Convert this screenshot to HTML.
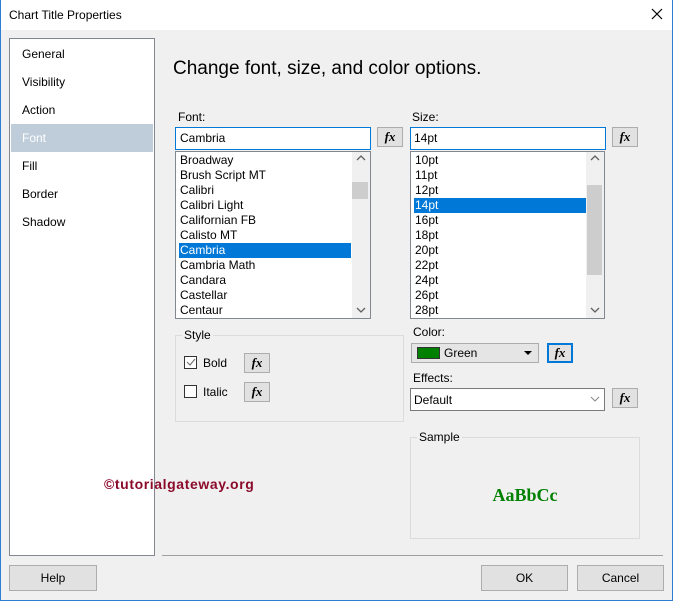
<!DOCTYPE html>
<html><head><meta charset="utf-8"><style>
*{box-sizing:border-box;margin:0;padding:0}
body{width:673px;height:601px;background:#f0f0f0;font-family:"Liberation Sans",sans-serif;font-size:12px;color:#000;position:relative;overflow:hidden}
.a{position:absolute}
.frame{left:0;top:0;width:673px;height:601px;border:1px solid #2b7fd4;border-top:none}
.title{left:0;top:0;width:673px;height:30px;background:#fff}
.nav{left:9px;top:38px;width:146px;height:518px;background:#fff;border:1px solid #828790}
.nav div{position:absolute;left:12px;font-size:12px}
.box{background:#fff;border:1px solid #7a7a7a}
.fx{background:#e1e1e1;border:1px solid #adadad;font-family:"Liberation Serif",serif;font-weight:bold;font-style:italic;font-size:13px;text-align:center;line-height:18px}
.list div{position:absolute;left:3px;height:15px;line-height:15px;width:172px;padding-left:1px}
.sel{background:#0078d7;color:#fff}
.sb{background:#f0f0f0}
.btn{background:#e1e1e1;border:1px solid #adadad;text-align:center;line-height:24px}
.grp{border:1px solid #dcdcdc}
.lbl{background:#f0f0f0;padding:0 2px}
</style></head><body>
<div class="a title"></div>
<div class="a" style="left:9px;top:8px;font-size:12px">Chart Title Properties</div>
<svg class="a" style="left:651px;top:8px" width="12" height="12"><path d="M1 1L11 11M11 1L1 11" stroke="#000" stroke-width="1.2"/></svg>
<div class="a frame"></div>

<div class="a nav">
<div style="top:8px">General</div>
<div style="top:36px">Visibility</div>
<div style="top:64px">Action</div>
<div style="left:1px;top:85px;width:142px;height:28px;background:#bfcddb"></div>
<div style="top:92px;color:#fff">Font</div>
<div style="top:120px">Fill</div>
<div style="top:148px">Border</div>
<div style="top:176px">Shadow</div>
</div>

<div class="a" style="left:173px;top:58px;font-size:19px;color:#000">Change font, size, and color options.</div>

<div class="a" style="left:178px;top:110px">Font:</div>
<div class="a box" style="left:175px;top:127px;width:196px;height:23px;border-color:#0078d7;padding:3px 4px">Cambria</div>
<div class="a fx" style="left:377px;top:127px;width:26px;height:20px">fx</div>
<div class="a box list" style="left:175px;top:151px;width:196px;height:168px;border-color:#828790">
<div style="top:1px">Broadway</div><div style="top:16px">Brush Script MT</div><div style="top:31px">Calibri</div><div style="top:46px">Calibri Light</div><div style="top:61px">Californian FB</div><div style="top:76px">Calisto MT</div><div class="sel" style="top:91px">Cambria</div><div style="top:106px">Cambria Math</div><div style="top:121px">Candara</div><div style="top:136px">Castellar</div><div style="top:151px">Centaur</div>
<div class="sb" style="left:176px;top:0;width:18px;height:166px;padding:0"></div>
<div style="left:176px;top:30px;width:16px;height:17px;background:#cdcdcd;padding:0"></div>
<svg class="a" style="left:180px;top:3px" width="10" height="6"><path d="M1 5L5 1L9 5" stroke="#606060" fill="none" stroke-width="1.3"/></svg>
<svg class="a" style="left:180px;top:155px" width="10" height="6"><path d="M1 1L5 5L9 1" stroke="#606060" fill="none" stroke-width="1.3"/></svg>
</div>

<div class="a" style="left:412px;top:110px">Size:</div>
<div class="a box" style="left:410px;top:127px;width:196px;height:23px;border-color:#0078d7;padding:3px 3px">14pt</div>
<div class="a fx" style="left:612px;top:127px;width:26px;height:20px">fx</div>
<div class="a box list" style="left:410px;top:151px;width:195px;height:168px;border-color:#828790">
<div style="top:1px">10pt</div><div style="top:16px">11pt</div><div style="top:31px">12pt</div><div class="sel" style="top:46px">14pt</div><div style="top:61px">16pt</div><div style="top:76px">18pt</div><div style="top:91px">20pt</div><div style="top:106px">22pt</div><div style="top:121px">24pt</div><div style="top:136px">26pt</div><div style="top:151px">28pt</div>
<div class="sb" style="left:175px;top:0;width:18px;height:166px;padding:0"></div>
<div style="left:176px;top:33px;width:15px;height:90px;background:#cdcdcd;padding:0"></div>
<svg class="a" style="left:179px;top:3px" width="10" height="6"><path d="M1 5L5 1L9 5" stroke="#606060" fill="none" stroke-width="1.3"/></svg>
<svg class="a" style="left:179px;top:155px" width="10" height="6"><path d="M1 1L5 5L9 1" stroke="#606060" fill="none" stroke-width="1.3"/></svg>
</div>

<div class="a grp" style="left:175px;top:335px;width:229px;height:87px"></div>
<div class="a lbl" style="left:182px;top:328px">Style</div>
<div class="a" style="left:184px;top:356px;width:13px;height:13px;border:1px solid #333;background:#fff"></div>
<svg class="a" style="left:186px;top:358px" width="10" height="9"><path d="M1 4L4 7L9 1" stroke="#777" fill="none" stroke-width="1.2"/></svg>
<div class="a" style="left:203px;top:356px">Bold</div>
<div class="a fx" style="left:244px;top:353px;width:26px;height:20px">fx</div>
<div class="a" style="left:184px;top:385px;width:13px;height:13px;border:1px solid #333;background:#fff"></div>
<div class="a" style="left:203px;top:385px">Italic</div>
<div class="a fx" style="left:244px;top:382px;width:26px;height:20px">fx</div>

<div class="a" style="left:413px;top:325px">Color:</div>
<div class="a" style="left:411px;top:343px;width:128px;height:20px;background:#e5e5e5;border:1px solid #adadad"></div>
<div class="a" style="left:417px;top:347px;width:23px;height:12px;background:#008000;border:1px solid #333"></div>
<div class="a" style="left:444px;top:346px">Green</div>
<svg class="a" style="left:524px;top:351px" width="9" height="5"><path d="M0 0H8L4 4Z" fill="#000"/></svg>
<div class="a fx" style="left:547px;top:343px;width:26px;height:20px;border:2px solid #0078d7;line-height:16px">fx</div>

<div class="a" style="left:413px;top:371px">Effects:</div>
<div class="a box" style="left:410px;top:388px;width:195px;height:23px;padding:4px 3px">Default</div>
<svg class="a" style="left:590px;top:396px" width="10" height="6"><path d="M1 1L5 5L9 1" stroke="#888" fill="none"/></svg>
<div class="a fx" style="left:612px;top:388px;width:26px;height:20px">fx</div>

<div class="a grp" style="left:410px;top:437px;width:230px;height:102px"></div>
<div class="a lbl" style="left:417px;top:430px">Sample</div>
<div class="a" style="left:410px;top:485px;width:230px;text-align:center;font-family:'Liberation Serif',serif;font-weight:bold;font-size:18px;color:#008000">AaBbCc</div>

<div class="a" style="left:104px;top:476px;font-weight:bold;font-size:14px;letter-spacing:0.6px;color:#8b0a2a">©tutorialgateway.org</div>

<div class="a" style="left:162px;top:555px;width:501px;height:1px;background:#a0a0a0"></div>
<div class="a btn" style="left:9px;top:565px;width:88px;height:26px">Help</div>
<div class="a btn" style="left:481px;top:565px;width:87px;height:26px">OK</div>
<div class="a btn" style="left:577px;top:565px;width:87px;height:26px">Cancel</div>
</body></html>
